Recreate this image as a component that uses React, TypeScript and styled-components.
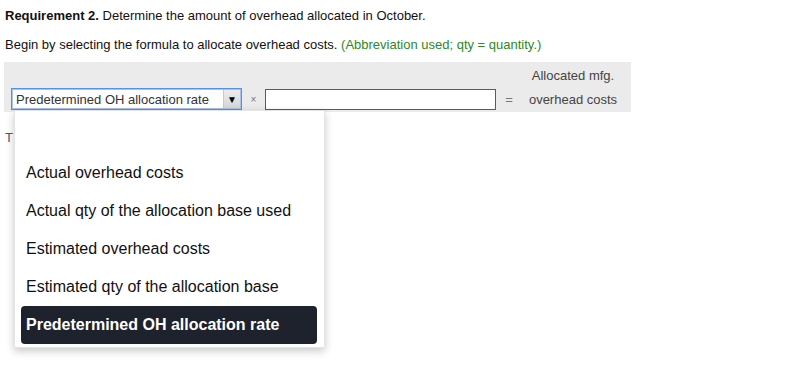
import React from "react";
import styled, { createGlobalStyle } from "styled-components";

const Global = createGlobalStyle`
  html, body { margin: 0; padding: 0; background: #fff; }
  body { font-family: "Liberation Sans", Arial, sans-serif; color: #000; }
`;

const Page = styled.div`
  position: relative;
  padding: 8px 4px 0 5px;
  width: 795px;
  height: 377px;
  box-sizing: border-box;
  font-size: 13px;
`;

const Line = styled.p<{ $mt?: number }>`
  margin: ${(p) => p.$mt ?? 0}px 0 0 0;
  line-height: 15px;
  font-size: 13px;
  color: #111;
`;

const Green = styled.span`
  color: #2a8a1e;
`;

const Panel = styled.div`
  margin: 10px 0 0 -1px;
  width: 627px;
  background: #ebebeb;
  padding: 0 7px 2px 7px;
  box-sizing: border-box;
`;

const HeaderRow = styled.div`
  display: flex;
  justify-content: flex-end;
  height: 26px;
  align-items: center;
`;

const ResultCell = styled.div`
  width: 102px;
  text-align: center;
  color: #444;
  font-size: 13px;
  line-height: 15px;
`;

const FormulaRow = styled.div`
  display: flex;
  align-items: center;
  height: 22px;
`;

const Select = styled.div`
  width: 231px;
  height: 22px;
  box-sizing: border-box;
  border: 1px solid #5b8ee6;
  box-shadow: 0 0 0 1px #a9c3ef inset;
  background: #fff;
  display: flex;
  align-items: center;
  justify-content: space-between;
  padding: 0 1px 0 4px;
`;

const SelectText = styled.span`
  color: #333;
  font-size: 13px;
`;

const ArrowBtn = styled.span`
  width: 16px;
  height: 18px;
  background: linear-gradient(#ececec, #d6d6d6);
  border-left: 1px solid #c8c8c8;
  display: flex;
  align-items: center;
  justify-content: center;
  font-size: 10px;
  color: #000;
`;

const Op = styled.span<{ $w: number; $fs: number }>`
  width: ${(p) => p.$w}px;
  text-align: center;
  color: #777;
  font-size: ${(p) => p.$fs}px;
`;

const Input = styled.div`
  width: 231px;
  height: 21px;
  box-sizing: border-box;
  border: 1px solid #1f6f8f;
  background: #fff;
`;

const Hidden = styled.p`
  margin: 18px 0 0 0;
  line-height: 15px;
  color: #4a5a70;
  font-size: 13px;
`;

const Menu = styled.ul`
  position: absolute;
  left: 14px;
  top: 110px;
  width: 311px;
  height: 238px;
  margin: 0;
  padding: 5px 7px 5px 6px;
  box-sizing: border-box;
  list-style: none;
  background: #fff;
  border: 1px solid #e4e4e4;
  box-shadow: 0 3px 8px rgba(0, 0, 0, 0.22);
`;

const Item = styled.li<{ $sel?: boolean }>`
  height: 38px;
  display: flex;
  align-items: center;
  padding-left: 5px;
  font-size: 16px;
  border-radius: 4px;
  color: ${(p) => (p.$sel ? "#fff" : "#111")};
  background: ${(p) => (p.$sel ? "#1d222d" : "transparent")};
  font-weight: ${(p) => (p.$sel ? 700 : 400)};
`;

const options = [
  "",
  "Actual overhead costs",
  "Actual qty of the allocation base used",
  "Estimated overhead costs",
  "Estimated qty of the allocation base",
  "Predetermined OH allocation rate",
];

export default function App() {
  return (
    <>
      <Global />
      <Page>
        <Line>
          <b>Requirement 2.</b> Determine the amount of overhead allocated in October.
        </Line>
        <Line $mt={14}>
          Begin by selecting the formula to allocate overhead costs.{" "}
          <Green>(Abbreviation used; qty = quantity.)</Green>
        </Line>
        <Panel>
          <HeaderRow>
            <ResultCell>Allocated mfg.</ResultCell>
          </HeaderRow>
          <FormulaRow>
            <Select>
              <SelectText>Predetermined OH allocation rate</SelectText>
              <ArrowBtn>▼</ArrowBtn>
            </Select>
            <Op $w={23} $fs={10}>×</Op>
            <Input />
            <Op $w={26} $fs={13}>=</Op>
            <ResultCell>overhead costs</ResultCell>
          </FormulaRow>
        </Panel>
        <Hidden>T</Hidden>
        <Menu>
          {options.map((o, i) => (
            <Item key={i} $sel={i === options.length - 1}>
              {o}
            </Item>
          ))}
        </Menu>
      </Page>
    </>
  );
}
